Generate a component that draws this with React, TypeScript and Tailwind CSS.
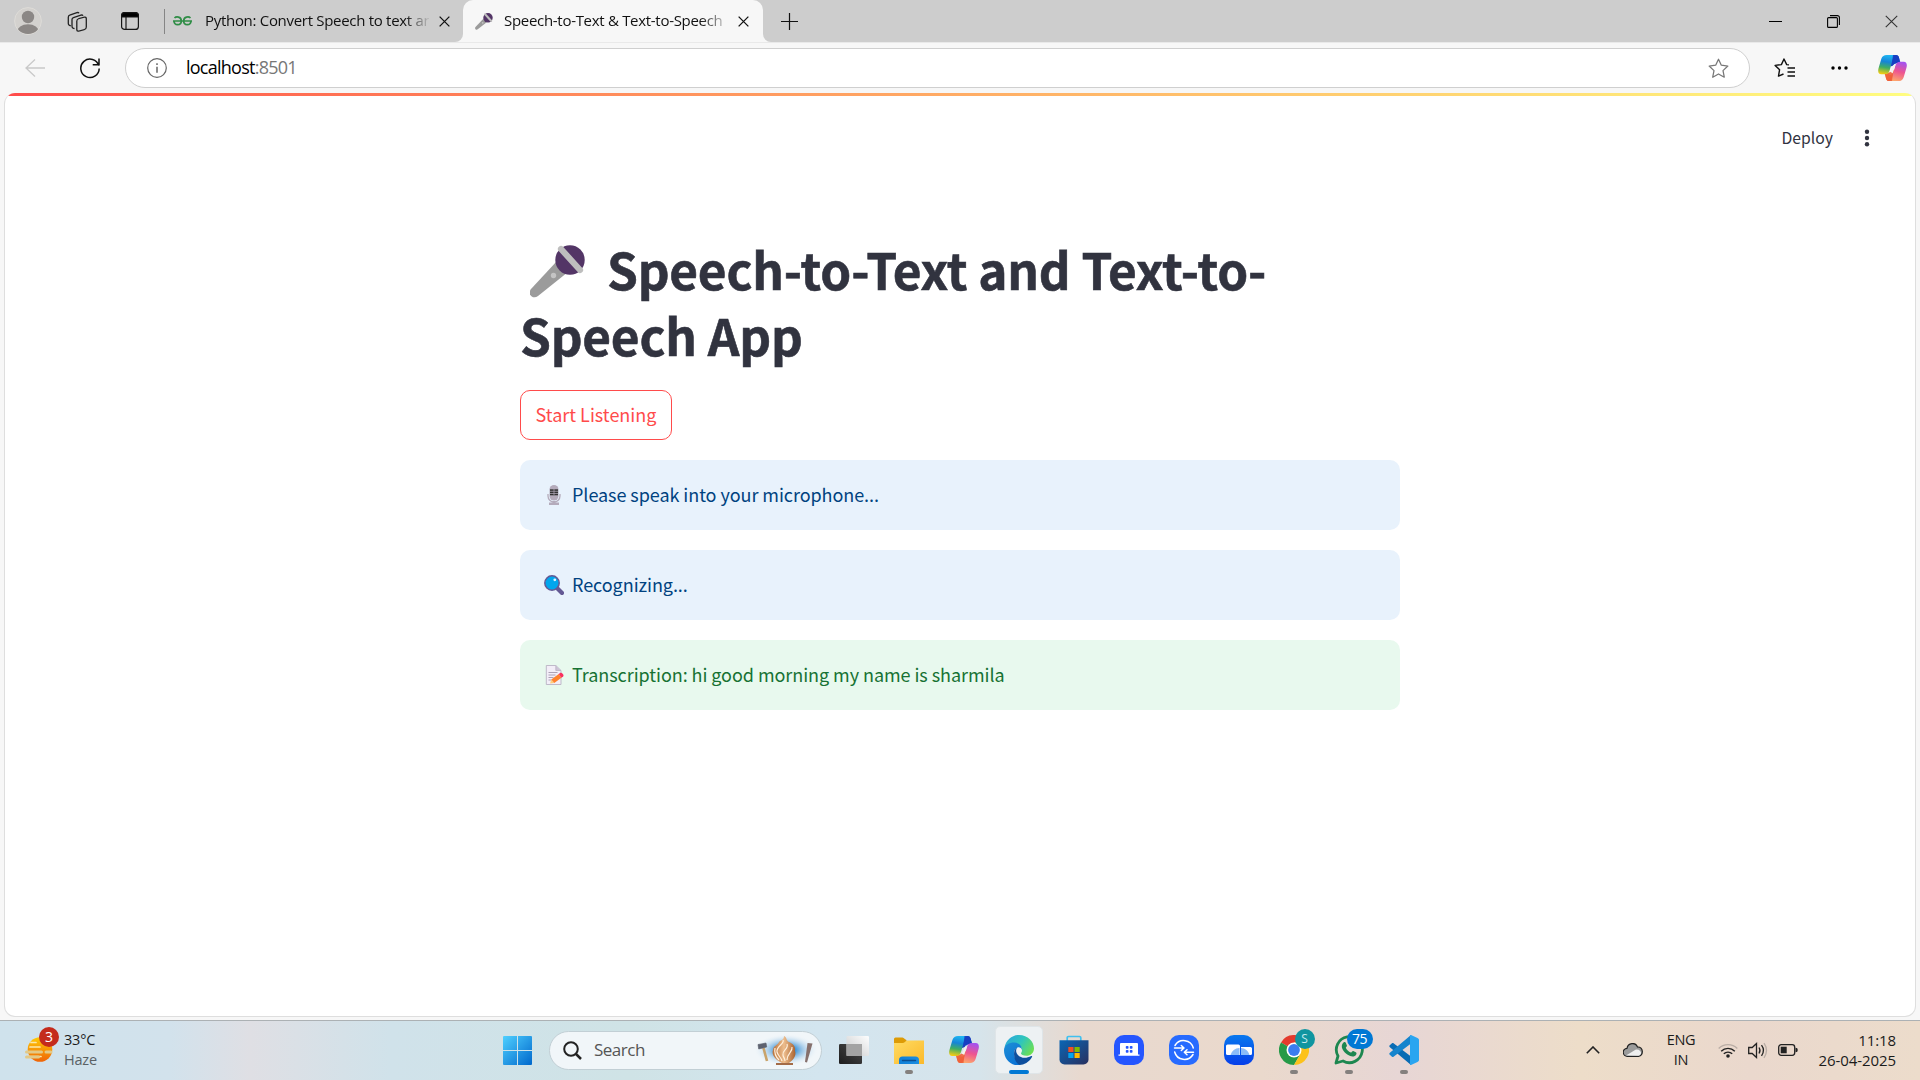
import React from "react";

const UI = "font-['Open_Sans','Noto_Sans',sans-serif]";
const SRC = "font-['Noto_Sans_CJK_SC',sans-serif]";

function Copilot({ id, className }: { id: string; className: string }) {
  return (
    <svg viewBox="0 0 30 27" className={className}>
      <defs>
        <linearGradient id={id + "a"} x1="0.5" y1="0" x2="0.35" y2="1">
          <stop offset="0" stopColor="#1fb6f2" />
          <stop offset="0.35" stopColor="#1684d8" />
          <stop offset="0.65" stopColor="#3fae64" />
          <stop offset="1" stopColor="#f6cc12" />
        </linearGradient>
        <linearGradient id={id + "b"} x1="0.6" y1="0" x2="0.35" y2="1">
          <stop offset="0" stopColor="#a553ee" />
          <stop offset="0.5" stopColor="#ee5590" />
          <stop offset="1" stopColor="#fda76c" />
        </linearGradient>
        <linearGradient id={id + "c"} x1="0" y1="0" x2="1" y2="1">
          <stop offset="0" stopColor="#f8b03e" />
          <stop offset="1" stopColor="#e83e3c" />
        </linearGradient>
      </defs>
      <path d="M13 0h5.500c2 0 2.800 1.300 3.200 2.700L23 8.500h-3.500c-2 0-3 .8-3.600 2.500L13 12z" fill="#173fc2" />
      <path d="M17 27h-5.500c-2 0-2.800-1.300-3.200-2.700L7 18.500h3.500c2 0 3-.8 3.600-2.500L17 15z" fill={`url(#${id}c)`} />
      <path d="M9 0h9.500c-1.500 0-2.300 1.400-2.700 2.700L12 16c-.9 2.700-2.300 4-4.600 4H3.300C.2 20-.4 17 .5 13.700L3.400 4C4.300 1.200 6.200 0 9 0z" fill={`url(#${id}a)`} />
      <path d="M21 27h-9.500c1.500 0 2.300-1.400 2.700-2.700L18 11c.9-2.700 2.300-4 4.600-4h4.100c3.100 0 3.700 3 2.800 6.300L26.600 23c-.9 2.800-2.800 4-5.600 4z" fill={`url(#${id}b)`} />
      <path d="M16 10.500h2l-2.800 8.500c-.4 1-1 1.500-2 1.500h-2z" fill="#f4f2f1" />
      <path d="M15.500 0h3c2 0 2.800 1.300 3.200 2.700L23 7.200c-3-.4-4.500.3-5.300 2.300L14.500 8z" fill="#173fc2" opacity=".9" />
      <path d="M14.500 27h-3c-2 0-2.800-1.300-3.200-2.700L7 19.800c3 .4 4.500-.3 5.300-2.300l3.200 1.500z" fill="#f0603a" opacity=".9" />
    </svg>
  );
}

function Mic({ className }: { className: string }) {
  return (
    <svg viewBox="0 0 55 53" className={className}>
      <path d="M27 16L38 27 8 51c-5 4-11-2-7-7z" fill="#9b9b9b" />
      <circle cx="23.500" cy="30.500" r="2.700" fill="#c4c4c4" />
      <circle cx="40" cy="15" r="14.700" fill="#533566" />
      <path d="M31 4L50 25" stroke="#bebebe" strokeWidth="6.200" strokeLinecap="round" />
    </svg>
  );
}

function Close({ className, w = 1.3 }: { className: string; w?: number }) {
  return (
    <svg viewBox="0 0 12 12" className={className}>
      <path d="M.7.7l10.600 10.600M11.300.7L.7 11.300" stroke="currentColor" strokeWidth={w} fill="none" />
    </svg>
  );
}

const STAR = "M10 1.200l2.700 5.700 6.200.8-4.600 4.300 1.200 6.300-5.500-3.100-5.500 3.100L5.700 12 1.100 7.700l6.200-.8z";

function TitleBar() {
  return (
    <div className={`flex h-[42px] w-full bg-[#f7f7f7] text-[#111] ${UI}`}>
      <div className="flex w-[463px] items-center rounded-br-[8px] bg-[#cdcdcd]">
        <svg viewBox="0 0 28 28" className="ml-[14px] size-[28px]">
          <clipPath id="av"><circle cx="14" cy="14" r="13" /></clipPath>
          <circle cx="14" cy="14" r="13.400" fill="#d3d1ce" stroke="#dedcd8" />
          <g clipPath="url(#av)" fill="#8b8785"><circle cx="14" cy="10" r="6.200" /><ellipse cx="14" cy="25" rx="11" ry="7.800" /></g>
        </svg>
        <svg viewBox="0 0 21 21" className="ml-[25px] size-[21px]" fill="none" stroke="#222" strokeWidth="1.300">
          <rect x="9.800" y="7" width="9.500" height="12.500" rx="2" transform="skewY(-14) translate(0 3.500)" />
          <path d="M7.500 17.600l-1.500-.5c-.8-.4-1-1-1-1.800V8.600c0-1 .5-1.700 1.400-2l7.500-2.500c1-.3 1.700 0 2.100.7" />
          <path d="M3.800 15l-1.600-.9c-.6-.4-.9-1-.9-1.700V6.200c0-1 .5-1.700 1.400-2l7.200-2.600c1-.3 1.700 0 2.100.7" />
        </svg>
        <svg viewBox="0 0 18 18" className="ml-[33px] size-[18px]" fill="none" stroke="#161616" strokeWidth="1.200">
          <rect x=".6" y=".6" width="16.800" height="16.800" rx="3" />
          <path d="M.6 5V3.500A3 3 0 013.600.6h10.800a3 3 0 013 3V5z" fill="#000" />
          <path d="M5 5v12" />
        </svg>
        <div className="ml-[25px] h-[25px] w-px bg-[#858585]" />
        <svg viewBox="0 0 19 10" className="ml-[8px] h-[10px] w-[19px]" fill="none" stroke="#2f8d46" strokeWidth="1.700">
          <path d="M1.500 2C3 .5 8.300.2 8.300 5c0 4.800-7 5-7.300 0M17.500 2C16 .5 10.700.2 10.700 5c0 4.800 7 5 7.300 0M0 5h19" />
        </svg>
        <div className="mb-[2px] ml-[13px] w-[224px] whitespace-nowrap text-[15px] leading-[20px] tracking-[-0.300px] [mask-image:linear-gradient(90deg,#000_200px,transparent_226px)]">
          Python: Convert Speech to text an
        </div>
        <Close className="ml-[10px] size-[11px]" w={1.4} />
      </div>
      <div className="flex w-[300px] items-center bg-[#cdcdcd]">
        <div className="flex h-[42px] w-[300px] items-center rounded-t-[10px] bg-[#f7f7f7]">
          <Mic className="ml-[12px] h-[17px] w-[18px]" />
          <div className="mb-[2px] ml-[11px] w-[222px] whitespace-nowrap text-[15px] leading-[20px] tracking-[-0.300px] [mask-image:linear-gradient(90deg,#000_196px,transparent_228px)]">
            Speech-to-Text &amp; Text-to-Speech
          </div>
          <Close className="ml-[12px] size-[11px]" w={1.4} />
        </div>
      </div>
      <div className="flex flex-1 items-center rounded-bl-[8px] bg-[#cdcdcd]">
        <svg viewBox="0 0 17 17" className="ml-[18px] size-[17px]"><path d="M8.500 0v17M0 8.500h17" stroke="#111" strokeWidth="1.200" /></svg>
        <div className="ml-auto h-px w-[13px] bg-black" />
        <svg viewBox="0 0 13 13" className="ml-[45px] size-[13px]" fill="none" stroke="#000" strokeWidth="1.100">
          <rect x=".6" y="2.600" width="9.800" height="9.800" rx="1" /><path d="M3 .6h7.400a2 2 0 012 2V10" />
        </svg>
        <Close className="ml-[45px] mr-[22px] size-[13px] text-[#333]" w={1} />
      </div>
    </div>
  );
}

function Toolbar() {
  return (
    <div className={`flex h-[51px] items-center border-t border-[#e9e9e9] bg-[#f7f7f7] ${UI}`}>
      <svg viewBox="0 0 20 20" className="ml-[25px] size-[20px]" fill="none" stroke="#c9c9c9" strokeWidth="1.300"><path d="M10 1.500L1 10l9 8.500M1 10h19" /></svg>
      <svg viewBox="0 0 22 22" className="ml-[34px] size-[22px]" fill="none" stroke="#111" strokeWidth="1.500"><path d="M19.800 8.600A9.200 9.200 0 1020.200 11.500M20 1.500v6.200h-6.300" /></svg>
      <div className="ml-[24px] flex h-[40px] w-[1625px] items-center rounded-full border border-[#cfcfcf] bg-white">
        <svg viewBox="0 0 20 20" className="ml-[21px] size-[20px]" fill="none" stroke="#666" strokeWidth="1.200"><circle cx="10" cy="10" r="9.300" /><path d="M10 8.800v6M10 5.300v1.700" strokeWidth="1.500" /></svg>
        <div className="mb-[2px] ml-[19px] text-[18px] leading-[24px] tracking-[-0.750px] text-black">localhost<span className="text-[#777]">:8501</span></div>
        <svg viewBox="0 0 20 20" className="ml-auto mr-[20px] size-[21px]" fill="none" stroke="#777" strokeWidth="1.200" strokeLinejoin="round"><path d={STAR} /></svg>
      </div>
      <svg viewBox="0 0 21 20" className="ml-[24px] h-[20px] w-[21px]" fill="none" stroke="#111" strokeWidth="1.400" strokeLinejoin="round">
        <path d="M15 6.900l-2.300-.3L10 1 7.400 6.600l-6.300.8 4.500 4.300-1.100 6.400L9.500 16M13.500 10H21M13.500 14H21M13.500 18H21" />
      </svg>
      <svg viewBox="0 0 17 4" className="ml-[36px] h-[4px] w-[17px]"><circle cx="2" cy="2" r="1.700" /><circle cx="8.500" cy="2" r="1.700" /><circle cx="15" cy="2" r="1.700" /></svg>
      <Copilot id="ct" className="ml-[30px] h-[26px] w-[29px]" />
    </div>
  );
}

function StudioMic() {
  return (
    <svg viewBox="0 0 20 20" className="size-[20px]">
      <path d="M4 9v2a6 6 0 0012 0V9" fill="none" stroke="#b4abbb" strokeWidth="1.300" />
      <rect x="5.500" y="0" width="9" height="15.500" rx="4.500" fill="#b4abbb" />
      <path d="M6 4.300h8v6H6z" fill="#333" /><path d="M6 6.300h8M6 8.500h8M10 4v6" stroke="#b4abbb" strokeWidth=".7" />
      <path d="M8.500 16h3v1.500H15V20H5v-2.500h3.500z" fill="#b4abbb" />
    </svg>
  );
}
function Magnifier() {
  return (
    <svg viewBox="0 0 20 20" className="size-[20px]">
      <path d="M13 13l5 5" stroke="#635994" strokeWidth="4.200" strokeLinecap="round" />
      <circle cx="8" cy="8" r="7.200" fill="#00a6ed" stroke="#635994" strokeWidth="1.500" />
      <circle cx="10.800" cy="4.800" r="1.400" fill="#e3f5ff" />
    </svg>
  );
}
function Memo() {
  return (
    <svg viewBox="0 0 20 20" className="size-[20px]">
      <path d="M2.300.5h9.500l5.200 5v14H2.300z" fill="#f3eef8" stroke="#b9b3c4" strokeWidth=".9" />
      <path d="M11.800.5v5H17" fill="#cdc4d6" stroke="#b9b3c4" strokeWidth=".8" />
      <path d="M4.500 7.500h9M4.500 10h7M4.500 12.500h5M4.500 15h3" stroke="#998ea4" strokeWidth=".8" />
      <path d="M6 18.600l1.300-4.200 3 3.500z" fill="#ffce7c" />
      <path d="M7.300 14.400l7.400-5.400 2.700 3.700-7.100 5.200z" fill="#ff822d" />
      <path d="M14.700 9l1.700-1.200c1.300-.8 4.200 2.300 2.700 3.600L17.400 12.700z" fill="#f92f60" />
    </svg>
  );
}

function Alert({ icon, text, tone }: { icon: React.ReactNode; text: string; tone: string }) {
  return (
    <div className={`flex h-[70px] items-center rounded-[10px] pl-[24px] ${tone}`}>
      {icon}
      <span className="mb-[3px] ml-[8px] text-[18px] leading-[32px] tracking-[-0.060px]">{text}</span>
    </div>
  );
}

function Page() {
  return (
    <div className="flex h-[927px] flex-col bg-[#f7f7f7] px-[4px]">
      <div className={`flex h-[924px] flex-col overflow-hidden rounded-[11px] border border-t-0 border-[#dedede] bg-white ${SRC}`}>
        <div className="h-[3px] bg-linear-to-r from-[#ff4b4b] to-[#fffd80]" />
        <div className="flex h-[84px] items-center justify-end pr-[45px] text-[#31333f]">
          <span className="text-[15.750px] leading-[24px]">Deploy</span>
          <svg viewBox="0 0 6 18" className="ml-[31px] h-[18px] w-[6px]" fill="#31333f"><circle cx="3" cy="2.700" r="2.200" /><circle cx="3" cy="9" r="2.200" /><circle cx="3" cy="15.300" r="2.200" /></svg>
        </div>
        <div className="ml-[515px] mt-[56px] w-[880px]">
          <h1 className="h-[132px] text-[49.500px] font-bold leading-[66px] tracking-[-0.220px] text-[#31333f] [-webkit-text-stroke:0.6px_#31333f]">
            <Mic className="ml-[10px] mr-[22px] inline-block h-[53px] w-[55px] align-[-8px]" />
            Speech-to-Text and Text-to-<br />Speech App
          </h1>
          <button className="mt-[22px] flex h-[50px] w-[152px] items-center justify-center rounded-[10px] border border-[#ff4b4b] pb-[2px] text-[18px] leading-[32px] text-[#ff4b4b]">
            Start Listening
          </button>
          <div className="mt-[20px] flex flex-col gap-[20px]">
            <Alert icon={<StudioMic />} text="Please speak into your microphone..." tone="bg-[#e8f2fc] text-[#004280]" />
            <Alert icon={<Magnifier />} text="Recognizing..." tone="bg-[#e8f2fc] text-[#004280]" />
            <Alert icon={<Memo />} text="Transcription: hi good morning my name is sharmila" tone="bg-[#e8f9ee] text-[#177233]" />
          </div>
        </div>
      </div>
    </div>
  );
}

function Slot({ children, running, active }: { children: React.ReactNode; running?: boolean; active?: boolean }) {
  return (
    <div className="relative flex h-[58px] w-[55px] items-center justify-center">
      <div className={active ? "flex size-[48px] items-center justify-center rounded-[5px] border border-[#dfe5e8] bg-[#edf1f3]" : "flex size-[48px] items-center justify-center"}>{children}</div>
      {running && <div className="absolute bottom-[5px] h-[4px] w-[8px] rounded-full bg-[#84807e]" />}
      {active && <div className="absolute bottom-[5px] h-[4px] w-[20px] rounded-full bg-[#0078d4]" />}
    </div>
  );
}

function Apps() {
  return (
    <div className="ml-[4px] flex">
      <Slot>
        <svg viewBox="0 0 30 28" className="mb-px h-[28px] w-[30px]">
          <defs>
            <linearGradient id="tv" x1="0" y1="1" x2="1" y2="0"><stop stopColor="#1d1d1d" /><stop offset="1" stopColor="#4a4a4a" /></linearGradient>
            <linearGradient id="tw" x1="0" y1="1" x2="1" y2="0"><stop stopColor="#c9c9c9" /><stop offset="1" stopColor="#fff" /></linearGradient>
          </defs>
          <rect y="8" width="23" height="20" rx="1.300" fill="url(#tv)" />
          <rect x="7.500" width="22.500" height="20" rx="1.300" fill="url(#tw)" opacity=".95" />
          <path d="M7.500 8H23v12H7.500z" fill="#a3a3a3" />
        </svg>
      </Slot>
      <Slot running>
        <svg viewBox="0 0 30 27" className="h-[27px] w-[30px]">
          <defs>
            <linearGradient id="fo" x1="0" y1="0" x2="1" y2="1"><stop stopColor="#ffdb62" /><stop offset="1" stopColor="#fbb92b" /></linearGradient>
            <linearGradient id="fb" x1="0" y1="0" x2="1" y2="0"><stop stopColor="#0f7fd8" /><stop offset="1" stopColor="#1b8de0" /></linearGradient>
          </defs>
          <path d="M0 2a1.500 1.500 0 011.500-1.500h7c1.500 0 2.500 2.500 4 2.500v4H0z" fill="#dd9b06" />
          <path d="M0 6h9c2 0 2.500-2.500 4-2.500h17V27H0z" fill="url(#fo)" />
          <path d="M5 27v-4a3.500 3.500 0 013.500-3.500h13A3.500 3.500 0 0125 23v4z" fill="url(#fb)" />
          <path d="M8.500 23.500h13" stroke="#0b4e91" strokeWidth="1.400" strokeLinecap="round" />
        </svg>
      </Slot>
      <Slot><Copilot id="cb" className="mb-[2px] h-[27px] w-[30px]" /></Slot>
      <Slot active>
        <svg viewBox="0 0 30 30" className="size-[30px]">
          <defs>
            <linearGradient id="e1" x1="0" y1=".2" x2="1" y2=".7"><stop stopColor="#2aa7dc" /><stop offset=".5" stopColor="#2fc5bd" /><stop offset="1" stopColor="#6ee04f" /></linearGradient>
            <linearGradient id="e2" x1="0" y1="0" x2=".6" y2="1"><stop stopColor="#1d8fd6" /><stop offset="1" stopColor="#0b72d4" /></linearGradient>
          </defs>
          <path d="M.5 12.500C2 5 8 0 15 0c9 0 15 6.500 15 13.500 0 4.500-3.500 7.300-7.500 7.300-3.500 0-5.500-1.300-5.500-2.300 0-.8 1-1.200 1-3.500 0-3-3-5.800-7.500-5.800-5 0-8.500 1.800-10 3.300z" fill="url(#e1)" />
          <path d="M11 30C4.500 28.500 0 22.500 0 15.500 0 10 5 7.500 10.300 7.500c5 0 7.700 4 7.700 7.500-.5-2-2.500-3.300-4.500-2.600-2.500 1-3.700 4-3.500 7 .3 4.500 4 8.300 8.500 8.600-2 2-5 2.600-7.500 2z" fill="url(#e2)" />
          <path d="M10 19c0-3 1.300-5.500 3.200-6.500-1.500 2-1.500 5 .5 7.300 3.500 4 9 3.700 13.500 1.300.8-.4 1.300.2.800 1C25 27.500 20 30 15.500 30 12 28 10 24 10 19z" fill="#0d4f9e" />
        </svg>
      </Slot>
      <Slot>
        <svg viewBox="0 0 30 30" className="size-[30px]">
          <defs><linearGradient id="st" x1="0" y1="0" x2="1" y2="1"><stop stopColor="#0a66b5" /><stop offset="1" stopColor="#29305f" /></linearGradient></defs>
          <path d="M8.200 7V2.800c0-.8.500-1.300 1.300-1.300h11c.8 0 1.300.5 1.300 1.300V7" fill="none" stroke="#41c0ef" strokeWidth="1.700" />
          <path d="M.5 5.300h29v19.200a5 5 0 01-5 5h-19a5 5 0 01-5-5z" fill="url(#st)" />
          <path d="M9.300 12h5.200v5H9.300z" fill="#f25022" /><path d="M15.500 12h5.200v5h-5.200z" fill="#7fba00" /><path d="M9.300 18h5.200v5H9.300z" fill="#00a4ef" /><path d="M15.500 18h5.200v5h-5.200z" fill="#ffb900" />
        </svg>
      </Slot>
      <Slot>
        <svg viewBox="0 0 30 30" className="size-[30px]">
          <rect width="30" height="30" rx="10" fill="#2556ff" /><path d="M7 8h16a1 1 0 011 1v10.500h1.500v1.300h-21v-1.300H6V9a1 1 0 011-1z" fill="#fff" />
          <g fill="#2556ff"><rect x="11.800" y="11" width="2.700" height="2.700" rx=".8" /><rect x="15.800" y="11" width="2.700" height="2.700" rx=".8" /><rect x="11.800" y="15" width="2.700" height="2.700" rx=".8" /><rect x="15.800" y="15" width="2.700" height="2.700" rx=".8" /></g>
        </svg>
      </Slot>
      <Slot>
        <svg viewBox="0 0 30 30" className="size-[30px]" fill="none" stroke="#fff" strokeWidth="1.500" strokeLinecap="round" strokeLinejoin="round">
          <rect width="30" height="30" rx="10" fill="#276bff" stroke="none" />
          <path d="M6 10.500A10 10 0 0124.300 13M5.700 17A10 10 0 0024 19.500M5.500 13h9M12.300 10.500l2.700 2.500-2.700 2.500M24.500 17.200h-9M18 14.700l-2.700 2.500 2.700 2.500" />
        </svg>
      </Slot>
      <Slot>
        <svg viewBox="0 0 30 30" className="size-[30px]">
          <defs><linearGradient id="wb" x1="0" y1="0" x2="0" y2="1"><stop stopColor="#0878ee" /><stop offset="1" stopColor="#073fe9" /></linearGradient></defs>
          <rect width="30" height="30" rx="10" fill="url(#wb)" />
          <path d="M2 11a1.500 1.500 0 011.500-1.500h11A1.500 1.500 0 0116 11v9H3.500A1.500 1.500 0 012 18.500z" fill="#fff" /><path d="M17 12h9.500a1.500 1.500 0 011.500 1.500v5a1.500 1.500 0 01-1.500 1.500H17z" fill="#fff" />
          <path d="M6.500 20a9 9 0 019-7v7zM17 13c4 0 7.500 3 8.500 7H17z" fill="#8cbcf8" />
        </svg>
      </Slot>
      <Slot running>
        <div className="relative size-[30px]">
          <svg viewBox="0 0 30 30" className="size-[30px]">
            <path d="M15 15L2 7.500A15 15 0 0128 7.500H15z" fill="#e33b2e" /><path d="M15 15l6.500 3.700L15 30A15 15 0 012 7.500z" fill="#269a48" /><path d="M15 7.500h13A15 15 0 0115 30l6.500-11.300z" fill="#fcc21b" />
            <circle cx="15" cy="15" r="7.500" fill="#fff" /><circle cx="15" cy="15" r="5.900" fill="#3a7df0" />
          </svg>
          <div className="absolute -top-[6px] left-[16px] flex size-[20px] items-center justify-center rounded-full bg-[#1095a0] text-[12px] text-[#c5e9eb]">S</div>
        </div>
      </Slot>
      <Slot running>
        <div className="relative size-[30px]">
          <svg viewBox="0 0 30 30" className="size-[30px]">
            <path d="M2 28l2-7A13 13 0 119 26z" fill="none" stroke="#1d8750" strokeWidth="2.800" strokeLinejoin="round" />
            <path d="M9.500 7.500c1-.8 2-.5 2.400.5l1 2.500c.3.800-1 1.700-1.100 2.300.8 2 2.800 4 5 4.800.8 0 1.500-1.900 2.500-1.600l2.500 1.200c1 .5.8 1.500.4 2.300-1 2-3.500 2.500-6 1.600-4-1.500-7.500-5-8.300-8.500-.4-2 .3-4 1.600-5.100z" fill="#1d8750" />
          </svg>
          <div className="absolute -top-[6px] left-[13px] flex h-[20px] w-[26px] items-center justify-center rounded-full bg-[#0078d4] text-[14px] leading-[18px] tracking-[-0.500px] text-white">75</div>
        </div>
      </Slot>
      <Slot running>
        <svg viewBox="0 0 30 30" className="size-[30px]">
          <path d="M.5 10.500L3 8.200c.5-.4 1-.4 1.500 0L22 21.500V30L.6 12c-.4-.5-.4-1-.1-1.500z" fill="#0a6cb4" />
          <path d="M.5 19.500L3 21.800c.5.400 1 .4 1.500 0L22 8.500V0L.6 18c-.4.500-.4 1-.1 1.500z" fill="#1684cd" />
          <path d="M22 0l6.500 3c1 .5 1.500 1.200 1.500 2.200v19.600c0 1-.5 1.700-1.500 2.200L22 30c-.6 0-1-.5-1-1V1c0-.5.400-1 1-1z" fill="#2aa5f0" />
        </svg>
      </Slot>
    </div>
  );
}

function Taskbar() {
  return (
    <div className={`flex h-[60px] items-center border-t border-[#acb1b4] bg-[linear-gradient(90deg,#cfe2ec_0px,#d2e2ec_170px,#dfdfe4_250px,#d0e2ea_390px,#cfe3e6_630px,#d3e5ef_820px,#d6e4eb_980px,#e8d9cf_1080px,#ead9cc_1260px,#e7d6d5_1400px,#edddc9_1580px,#ead8cd_1750px,#ecdccb_1920px)] pb-px text-[#1b1b1b] ${UI}`}>
      <div className="ml-[25px] flex w-[478px] items-center">
        <div className="relative size-[28px]">
          <svg viewBox="0 0 28 28" className="mt-px size-[28px]">
            <defs><linearGradient id="su" x1="0" y1="0" x2="0" y2="1"><stop stopColor="#ffcb05" /><stop offset="1" stopColor="#ef6408" /></linearGradient></defs>
            <circle cx="15" cy="12.500" r="12.300" fill="url(#su)" />
            <path d="M6 5.500h5M5 10h10M3 19.500h13M10 15h3" stroke="#fbe7a8" strokeWidth="1.700" strokeLinecap="round" />
            <path d="M1.500 15h15M21 15h5M1.500 20h12" stroke="#e3c987" strokeWidth="3" strokeLinecap="round" />
          </svg>
          <div className="absolute -top-[9px] left-[14px] flex size-[20px] items-center justify-center rounded-full bg-[#c42b1c] text-[14px] leading-[18px] text-white">3</div>
        </div>
        <div className="ml-[11px] text-[14.500px] leading-[20px] tracking-[-0.200px]">33°C<div className="text-[#5a6165]">Haze</div></div>
      </div>
      <svg viewBox="0 0 29 29" className="size-[29px]">
        <defs><linearGradient id="wi" x1="0" y1="0" x2="29" y2="29" gradientUnits="userSpaceOnUse"><stop stopColor="#4fd0ff" /><stop offset="1" stopColor="#0068cc" /></linearGradient></defs>
        <path d="M1 0h13v14H0V1a1 1 0 011-1zM15 0h13a1 1 0 011 1v13H15zM0 15h14v14H1a1 1 0 01-1-1zM15 15h14v13a1 1 0 01-1 1H15z" fill="url(#wi)" />
      </svg>
      <div className="ml-[17px] flex h-[39px] w-[273px] items-center rounded-full border border-[#c2cfd5] bg-[#f1f6f9]">
        <svg viewBox="0 0 19 19" className="ml-[13px] size-[19px]" fill="none" stroke="#222" strokeWidth="2"><circle cx="8" cy="8" r="6.800" /><path d="M12.500 12.500l5.500 5.500" strokeWidth="2.500" /></svg>
        <span className="ml-[12px] text-[17px] leading-[24px] tracking-[-0.500px] text-[#555]">Search</span>
        <svg viewBox="0 0 68 36" className="ml-auto mr-px h-[36px] w-[68px]">
          <defs>
            <radialGradient id="gl"><stop offset=".3" stopColor="#4596d6" /><stop offset="1" stopColor="#f1f6f9" stopOpacity="0" /></radialGradient>
            <linearGradient id="wo" x1="0" y1="0" x2="1" y2="0"><stop stopColor="#b9723c" /><stop offset=".5" stopColor="#edbd8d" /><stop offset="1" stopColor="#a9622f" /></linearGradient>
          </defs>
          <ellipse cx="34" cy="18" rx="32" ry="16" fill="url(#gl)" />
          <path d="M11.500 16l3.500 13" stroke="#c9a36a" strokeWidth="2.600" /><path d="M6 12.500l8-1.500.7 4-8 2z" fill="#5d6270" stroke="#585c69" strokeWidth=".6" />
          <path d="M55.500 11l5 .5-5.500 19-2-.5z" fill="#85706d" />
          <path d="M32 4c3 1 2 5 5 6 3 1 7 4 6 9 2 5-3 10-6 12h-7c-6-3-11-8-9-13 0-4 5-5 6-8 2-2 5-2 5-6z" fill="url(#wo)" />
          <path d="M31 8c2 4-7 6-6 12 1 4 4 5 5 9M35 12c2 5-5 6-4 11 0 2 2 3 2 6M40 15c1 5-5 6-5 13M23 16c-1 5 1 9 4 12" fill="none" stroke="#fff0dc" strokeWidth="1.200" />
          <path d="M24 31h17v2H24z" fill="#a36b47" />
        </svg>
      </div>
      <Apps />
      <svg viewBox="0 0 14 8" className="ml-[155px] h-[8px] w-[14px]" fill="none" stroke="#222" strokeWidth="1.600"><path d="M.8 7.200L7 1l6.200 6.200" /></svg>
      <svg viewBox="0 0 20 14" className="ml-[23px] h-[14px] w-[20px]">
        <path d="M4.500 13.300a4 4 0 01-.5-8C5-.5 12.500-1 14.500 4c6-.5 6.500 9 1 9.300z" fill="#9b9b9b" stroke="#222" strokeWidth="1.200" />
        <path d="M3 12.500l9.500-5.700c4-2 8.500 4.500 3 5.900z" fill="#efefef" />
      </svg>
      <div className="ml-[23px] w-[30px] text-center text-[14.500px] leading-[20px] tracking-[-0.300px]">ENG<br />IN</div>
      <svg viewBox="0 0 20 15" className="ml-[22px] h-[15px] w-[20px]" fill="none" stroke="#222" strokeWidth="1.400">
        <path d="M.7 5.500a13 13 0 0118.600 0" stroke="#b9ada5" /><path d="M3.200 8.200a9.500 9.500 0 0113.600 0M5.800 10.800a6 6 0 018.400 0" /><circle cx="10" cy="13" r="1.800" fill="#222" stroke="none" />
      </svg>
      <svg viewBox="0 0 20 17" className="ml-[10px] h-[17px] w-[20px]" fill="none" stroke="#222" strokeWidth="1.300">
        <path d="M.7 5.500h3.500L8.500 1.500v14l-4.300-4H.7z" /><path d="M11 5.500q2 3 0 6M13.500 3.200q4 5.300 0 10.600" /><path d="M16 1.200q5 7.300 0 14.600" stroke="#b9ada5" />
      </svg>
      <svg viewBox="0 0 20 12" className="ml-[10px] h-[12px] w-[20px]"><rect x=".7" y=".7" width="16" height="10.600" rx="2.500" fill="none" stroke="#222" strokeWidth="1.300" /><rect x="2.700" y="2.700" width="6" height="6.600" fill="#222" /><path d="M17.500 3.800c1.500 0 2.200.7 2.200 2.200s-.7 2.200-2.200 2.200z" fill="#222" /></svg>
      <div className="ml-auto mr-[24px] text-right text-[15px] leading-[20px] tracking-[-0.080px]">11:18<br />26-04-2025</div>
    </div>
  );
}

export default function App() {
  return (
    <div className="flex h-[1080px] w-[1920px] flex-col overflow-hidden bg-[#f7f7f7]">
      <TitleBar />
      <Toolbar />
      <Page />
      <Taskbar />
    </div>
  );
}
